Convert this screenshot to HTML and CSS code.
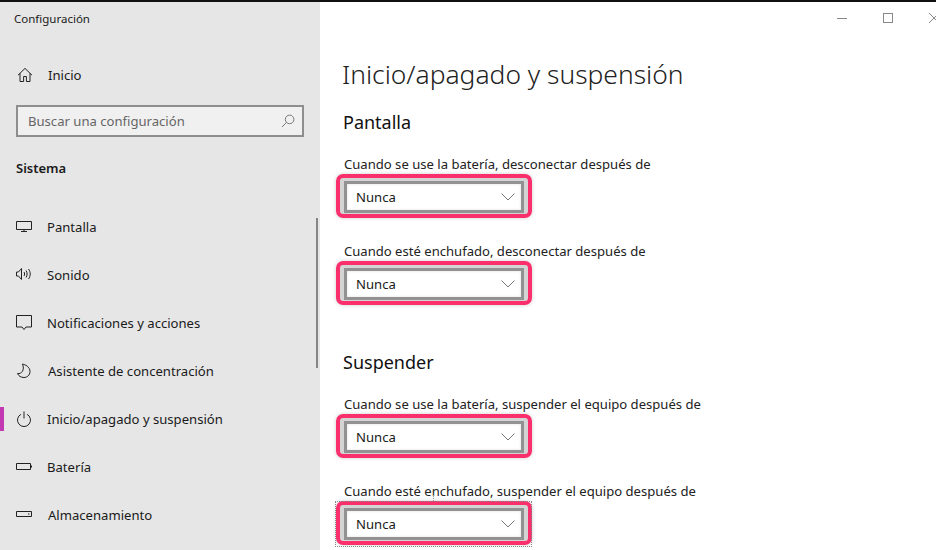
FILE: index.html
```html
<!DOCTYPE html>
<html lang="es">
<head>
<meta charset="utf-8">
<title>Configuración</title>
<link rel="stylesheet" href="styles.css">
</head>
<body>
<div class="window">
  <aside class="sidebar">
    <div class="app-title">Configuración</div>
    <a class="nav-row home">
      <svg class="icon" viewBox="0 0 16 16"><path d="M1 8.200 8 1.400l7 6.800M3 6.300V14.500h3.600V9.500h2.800v5H13V6.300"/></svg>
      <span>Inicio</span>
    </a>
    <div class="search"><span>Buscar una configuración</span>
      <svg class="search-icon" viewBox="0 0 14 14"><circle cx="8.600" cy="5.400" r="4.300"/><path d="M5.400 8.600 1 13"/></svg>
    </div>
    <div class="section">Sistema</div>
    <nav class="nav-list">
      <a class="nav-row"><svg class="icon" viewBox="0 0 16 16"><path d="M.5 2.500h15v8H.5zM8 10.500v2M5 12.500h6"/></svg><span>Pantalla</span></a>
      <a class="nav-row"><svg class="icon" viewBox="0 0 16 16"><path d="M.5 5h2l3-3.500v11l-3-3.500h-2zM8 5c.8 1 .8 3 0 4M10 3.500c1.500 2 1.500 5 0 7M12.500 2c2.300 3 2.300 7 0 10"/></svg><span>Sonido</span></a>
      <a class="nav-row"><svg class="icon" viewBox="0 0 16 16"><path d="M.5.500h15v11.500H10L8 14.500 6 12H.5z"/></svg><span>Notificaciones y acciones</span></a>
      <a class="nav-row"><svg class="icon" viewBox="0 0 16 16"><path d="M6.500 1C9 1.500 14 3.800 14 8.500c0 3.800-3 6-6 6-3 0-5.500-1.500-6.500-4 4 .8 7.500-3.500 5-9.500z"/></svg><span class="shift">Asistente de concentración</span></a>
      <a class="nav-row active"><svg class="icon" viewBox="0 0 16 16"><path d="M5 3.300a6.500 6.500 0 1 0 6 0M8 .5v7"/></svg><span>Inicio/apagado y suspensión</span></a>
      <a class="nav-row"><svg class="icon" viewBox="0 0 16 16"><path d="M.5 4.500h14v6H.5zM15.500 6.500v2"/></svg><span>Batería</span></a>
      <a class="nav-row"><svg class="icon" viewBox="0 0 16 16"><path d="M.5 4.500h15v5H.5zM12 7h1.500"/></svg><span class="shift">Almacenamiento</span></a>
    </nav>
    <div class="scroll-thumb"></div>
  </aside>
  <main class="content">
    <div class="titlebar">
      <span class="win-min"></span>
      <span class="win-max"></span>
      <svg class="win-close" viewBox="0 0 10 10"><path d="M0 0l10 10M10 0 0 10"/></svg>
    </div>
    <h1>Inicio/apagado y suspensión</h1>
    <section class="group">
      <h2>Pantalla</h2>
      <label class="field-label">Cuando se use la batería, desconectar después de</label>
      <div class="select"><span>Nunca</span><svg class="chev" viewBox="0 0 14 8"><path d="M.5.500 7 7l6.500-6.500"/></svg></div>
      <label class="field-label second">Cuando esté enchufado, desconectar después de</label>
      <div class="select"><span>Nunca</span><svg class="chev" viewBox="0 0 14 8"><path d="M.5.500 7 7l6.500-6.500"/></svg></div>
    </section>
    <section class="group suspend">
      <h2>Suspender</h2>
      <label class="field-label">Cuando se use la batería, suspender el equipo después de</label>
      <div class="select"><span>Nunca</span><svg class="chev" viewBox="0 0 14 8"><path d="M.5.500 7 7l6.500-6.500"/></svg></div>
      <label class="field-label second">Cuando esté enchufado, suspender el equipo después de</label>
      <div class="select marquee"><span>Nunca</span><svg class="chev" viewBox="0 0 14 8"><path d="M.5.500 7 7l6.500-6.500"/></svg><i class="handle"></i></div>
    </section>
  </main>
</div>
</body>
</html>
```
FILE: styles.css
```css
*, *::before, *::after { box-sizing: border-box; }
html, body { margin: 0; height: 100%; overflow: hidden; background: #fff; }
body { font-family: "Noto Sans", "Open Sans", sans-serif; color: #1a1a1a; }
.window { display: flex; width: 936px; height: 550px; border-top: 2px solid #111; overflow: hidden; }
.sidebar { position: relative; flex: 0 0 320px; background: #e6e6e6; padding-top: 10px; font-size: 13.100px; }
.app-title { padding-left: 14px; font-size: 11.500px; line-height: 14px; height: 14px; }
.nav-row { display: flex; align-items: center; height: 48px; padding-left: 16px; gap: 15px; position: relative; }
.icon { flex: none; width: 16px; height: 16px; fill: none; stroke: #222; stroke-width: 1; }
.home { margin-top: 25px; }
.home .icon { margin-left: 1px; }
.search { display: flex; align-items: center; justify-content: space-between; margin: 6px 16px 0; width: 288px; height: 32px; border: 2px solid #8e8e8e; background: #f0f0f0; padding: 0 7px 0 10px; color: #666; }
.search-icon { width: 14px; height: 14px; fill: none; stroke: #777; stroke-width: 1; }
.section { margin: 22px 0 0 16px; font-weight: 600; line-height: 18px; font-size: 13px; }
.nav-list { margin-top: 26px; display: flex; flex-direction: column; }
.shift { margin-left: 1px; }
.active::before { content: ""; position: absolute; left: 0; top: 12px; width: 4px; height: 24px; background: #c239b3; }
.scroll-thumb { position: absolute; left: 316px; top: 216px; width: 2px; height: 150px; background: #858585; }
.content { flex: 1; padding-left: 22px; min-width: 0; overflow: hidden; }
.titlebar { display: flex; align-items: center; height: 32px; padding-left: 495px; }
.win-min { flex: none; width: 10px; height: 1px; background: #888; }
.win-max { flex: none; width: 10px; height: 10px; border: 1px solid #888; margin-left: 36px; }
.win-close { flex: none; width: 10px; height: 10px; margin-left: 36px; fill: none; stroke: #888; stroke-width: 1; }
h1 { margin: 20px 0 0; font-weight: 300; font-size: 26.400px; line-height: 40px; color: #222; }
h2 { margin: 0; font-weight: 400; font-size: 18px; line-height: 24px; color: #111; padding-left: 1px; }
.group { margin-top: 16px; }
.suspend { margin-top: 51px; }
.field-label { display: block; margin: 21px 0 0 2px; font-size: 13.080px; line-height: 18px; color: #222; }
.field-label.second { margin-top: 30px; }
.select { position: relative; display: flex; align-items: center; justify-content: space-between; width: 180px; height: 32px; margin: 8px 0 -1px 2px; padding: 0 1px 0 9px; border: 3px solid #929292; background: #fff; font-size: 13.100px; box-shadow: 0 0 0 4px #d4d4d4, inset 0 0 3px rgba(0,0,0,.12); }
.select::before { content: ""; position: absolute; left: -11px; top: -10px; width: 196px; height: 44px; border: 4px solid #fb2f6c; border-radius: 7px; box-shadow: 0 0 4px rgba(0,0,0,.2); pointer-events: none; }
.chev { width: 14px; height: 8px; fill: none; stroke: #777; stroke-width: 1; margin-right: 5px; }
.marquee::after { content: ""; position: absolute; left: -12px; top: -10px; width: 197px; height: 46px; border: 1px dotted #888; }
.handle { position: absolute; left: 86px; top: -16px; height: 6px; border-left: 1px dotted #999; }
```
